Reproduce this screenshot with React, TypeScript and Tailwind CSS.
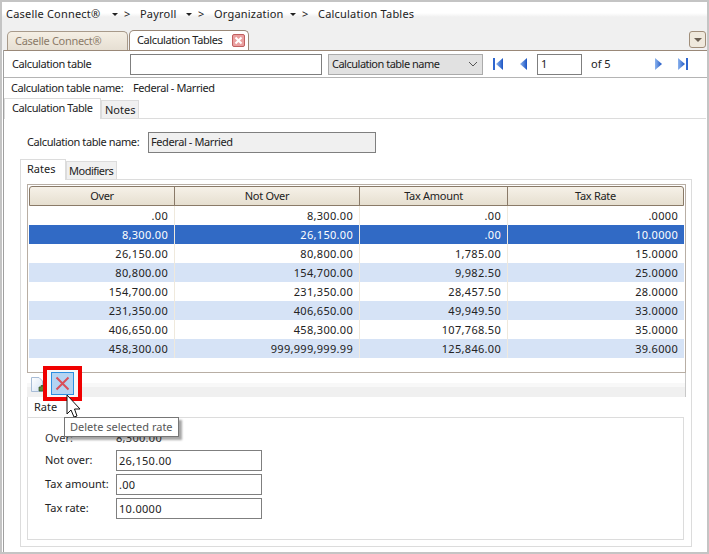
const rows = [
  [".00", "8,300.00", ".00", ".0000"],
  ["8,300.00", "26,150.00", ".00", "10.0000"],
  ["26,150.00", "80,800.00", "1,785.00", "15.0000"],
  ["80,800.00", "154,700.00", "9,982.50", "25.0000"],
  ["154,700.00", "231,350.00", "28,457.50", "28.0000"],
  ["231,350.00", "406,650.00", "49,949.50", "33.0000"],
  ["406,650.00", "458,300.00", "107,768.50", "35.0000"],
  ["458,300.00", "999,999,999.99", "125,846.00", "39.6000"],
];
const widths = ["w-[146px]", "w-[185px]", "w-[148px]", "w-[176px]"];
const headWidths = ["w-[145px]", "w-[185px]", "w-[148px]", "w-[175px]"];

function Crumb({ label, w }: { label: string; w: string }) {
  return (
    <div className={`flex items-center ${w}`}>
      <span>{label}</span>
      <span className="ml-auto w-0 h-0 border-x-[3px] border-x-transparent border-t-[3px] border-t-[#222] mr-[6px]" />
      <span className="w-[16px]">&gt;</span>
    </div>
  );
}

function Nav({ d }: { d: "first" | "prev" | "next" | "last" }) {
  const left = d === "first" || d === "prev";
  return (
    <svg width="12" height="14" viewBox="0 0 12 14" className="shrink-0">
      <defs>
        <linearGradient id={`n${d}`} x1="0" y1="0" x2="1" y2="0">
          <stop offset="0" stopColor="#8db4ee" />
          <stop offset="1" stopColor="#1c55c4" />
        </linearGradient>
      </defs>
      {d === "first" && <rect x="0" y="1" width="2" height="12" fill="#2f66cf" />}
      {d === "last" && <rect x="10" y="1" width="2" height="12" fill="#2f66cf" />}
      <path d={left ? "M10 1 L3 7 L10 13 Z" : "M2 1 L9 7 L2 13 Z"} fill={`url(#n${d})`} />
    </svg>
  );
}

function FormRow({ label, value }: { label: string; value: string }) {
  return (
    <div className="flex items-center h-[21px] mb-[3px]">
      <span className="w-[71px]">{label}</span>
      <div className="w-[146px] h-[21px] border border-[#7f7f7f] bg-white px-[2px] leading-[19px] tracking-[0.3px]">{value}</div>
    </div>
  );
}

export default function App() {
  return (
    <div className="relative w-[709px] h-[554px] overflow-hidden whitespace-nowrap bg-white text-[11px] text-[#222] border-2 border-[#c4c4c4] font-['Noto_Sans',sans-serif]">
      {/* header band: breadcrumb and document tabs */}
      <div className="h-[48px] bg-[linear-gradient(to_bottom,#ffffff_0px,#ffffff_11px,#f0f0f0_15px)]">
        <div className="flex items-center h-[24px] pl-[4px] tracking-[0.2px]">
          <Crumb label="Caselle Connect®" w="w-[134px]" />
          <Crumb label="Payroll" w="w-[74px]" />
          <Crumb label="Organization" w="w-[104px]" />
          <span>Calculation Tables</span>
        </div>
        <div className="flex items-end h-[24px] pl-[5px] pr-[1px]">
          <div className="w-[121px] h-[19px] rounded-t-[5px] border border-b-0 border-[#a89a8a] bg-gradient-to-b from-[#f5efe4] to-[#e6dfd3] text-[#8a7a68] pl-[7px] leading-[18px] tracking-[-0.3px]">Caselle Connect®</div>
          <div className="w-[120px] h-[20px] ml-[1px] rounded-t-[5px] border border-b-0 border-[#9a8878] bg-white pl-[7px] flex items-center tracking-[-0.4px]">
            Calculation Tables
            <span className="ml-auto mr-[3px] w-[13px] h-[13px] rounded-[2px] border border-[#c06060] bg-[#eaa0a0] flex items-center justify-center">
              <svg width="9" height="9" viewBox="0 0 9 9"><path d="M1.5 1.5 L7.5 7.5 M7.5 1.5 L1.5 7.5" stroke="#fff" strokeWidth="2" /></svg>
            </span>
          </div>
          <div className="ml-auto mb-[2px] w-[17px] h-[17px] rounded-[3px] border border-[#a08e7a] bg-[#efe9dd] flex items-center justify-center">
            <span className="w-0 h-0 border-x-[4px] border-x-transparent border-t-[4px] border-t-[#6a5f52]" />
          </div>
        </div>
      </div>
      {/* doc body */}
      <div className="ml-[1px] border-l border-[#a0a0a0] h-[503px]">
        <div className="border-t border-[#9a8878]" />
        {/* filter row */}
        <div className="flex items-center h-[27px] border-b border-[#b4b4b4] pl-[8px]">
          <span className="w-[118px] tracking-[-0.4px]">Calculation table</span>
          <div className="w-[192px] h-[21px] border border-[#7f7f7f] bg-white" />
          <div className="ml-[6px] w-[155px] h-[21px] border border-[#ababab] bg-[#e1e1e1] px-[3px] flex items-center tracking-[-0.5px]">
            Calculation table name
            <svg width="10" height="6" viewBox="0 0 10 6" className="ml-auto mr-[1px]"><path d="M1 1 L5 5 L9 1" fill="none" stroke="#555" /></svg>
          </div>
          <div className="ml-[10px]"><Nav d="first" /></div>
          <div className="ml-[12px]"><Nav d="prev" /></div>
          <div className="ml-[8px] w-[45px] h-[21px] border border-[#7f7f7f] bg-white px-[3px] leading-[17px]">1</div>
          <span className="ml-[9px] w-[62px]">of 5</span>
          <Nav d="next" />
          <div className="ml-[11px]"><Nav d="last" /></div>
        </div>
        {/* name row */}
        <div className="flex h-[20px] items-center pl-[7px] tracking-[-0.4px]">
          <span className="w-[122px]">Calculation table name:</span>
          <span>Federal - Married</span>
        </div>
        {/* main tabs */}
        <div className="flex items-end h-[21px] mr-[1px] border-b border-[#dcdcdc]">
          <div className="w-[97px] h-[21px] border border-b-0 border-[#dcdcdc] bg-white pl-[7px] leading-[17px] -mb-px z-10 tracking-[-0.4px]">Calculation Table</div>
          <div className="w-[38px] h-[18px] border border-b-0 border-[#dcdcdc] bg-[#f0f0f0] pl-[3px] leading-[18px]">Notes</div>
        </div>
        {/* main pane */}
        <div className="pt-[13px] pl-[16px]">
          <div className="flex items-center h-[21px] pl-[7px] tracking-[-0.4px]">
            <span className="w-[121px]">Calculation table name:</span>
            <div className="w-[228px] h-[21px] border border-[#7f7f7f] bg-[#f0f0f0] px-[2px] leading-[17px]">Federal - Married</div>
          </div>
          {/* inner tabs */}
          <div className="flex items-end h-[21px] mt-[6px] border-b border-[#dcdcdc] w-[672px]">
            <div className="w-[46px] h-[21px] border border-b-0 border-[#dcdcdc] bg-white pl-[6px] leading-[17px] -mb-px z-10">Rates</div>
            <div className="w-[51px] h-[18px] border border-b-0 border-[#dcdcdc] bg-[#f0f0f0] pl-[2px] leading-[18px] tracking-[-0.5px]">Modifiers</div>
          </div>
          <div className="w-[672px] h-[367px] border-x border-b border-[#dcdcdc] pl-[6px] pt-[4px]">
            {/* grid */}
            <div className="w-[659px] h-[189px] border border-[#b8aea4] px-[1px] pt-[1px]">
              <div className="flex h-[20px] border border-[#8a7a68] rounded-t-[3px] bg-gradient-to-b from-[#f6f1e8] to-[#e6dfd0] tracking-[-0.3px]">
                {["Over", "Not Over", "Tax Amount", "Tax Rate"].map((h, i) => (
                  <div key={h} className={`${headWidths[i]} ${i < 3 ? "border-r border-[#8a7a68]" : "grow"} text-center leading-[17px]`}>{h}</div>
                ))}
              </div>
              {rows.map((r, i) => (
                <div key={i} className={`flex h-[19px] ${i === 1 ? "bg-[#316ac5] text-white" : i % 2 === 1 ? "bg-[#d6e3f6]" : "bg-white"}`}>
                  {r.map((c, j) => (
                    <div key={j} className={`${widths[j]} ${j < 3 ? "border-r border-[#efe9dd]" : "grow"} text-right pr-[6px] leading-[19px] tracking-[0.3px]`}>{c}</div>
                  ))}
                </div>
              ))}
            </div>
            {/* toolbar */}
            <div className="w-[659px] h-[24px] flex flex-col relative border-r border-[#c8c8c8]">
              <div className="h-[10px]" />
              <div className="h-[4px] bg-[#f8f8f8]" />
              <div className="h-[10px] bg-[#f0f0f0]" />
              <svg width="17" height="18" viewBox="0 0 17 18" className="absolute left-[3px] top-[3px]">
                <defs>
                  <linearGradient id="pg" x1="0" y1="0" x2="1" y2="1">
                    <stop offset="0" stopColor="#ffffff" />
                    <stop offset="1" stopColor="#d4e2f4" />
                  </linearGradient>
                </defs>
                <path d="M1.5 1.5 H9 L12.5 5 V15.5 H1.5 Z" fill="url(#pg)" stroke="#a7bcd6" />
                <path d="M9 11 H11 V9.5 H13 V11 H15 V15 H9 Z" fill="#5c8a3c" stroke="#2f4f22" strokeWidth="0.7" />
              </svg>
            </div>
            {/* rate group */}
            <div className="w-[657px] border-l border-[#dcdcdc]">
              <div className="h-[20px] pl-[6px] leading-[19px]">Rate</div>
              <div className="h-[123px] -ml-px border border-[#dcdcdc] pl-[17px] pt-[11px]">
                <div className="flex items-center h-[18px] mb-[3px] text-[#333]"><span className="w-[71px]">Over:</span><span className="tracking-[0.3px]">8,300.00</span></div>
                <FormRow label="Not over:" value="26,150.00" />
                <FormRow label="Tax amount:" value=".00" />
                <FormRow label="Tax rate:" value="10.0000" />
              </div>
            </div>
          </div>
        </div>
      </div>

      {/* overlays: highlighted delete button, pointer and tooltip */}
      <div className="absolute left-[41px] top-[364px] w-[39px] h-[35px] border-[4px] border-[#f00000] bg-[#f8f8f8] flex items-center justify-center">
        <div className="w-[23px] h-[23px] border border-[#2d8ee0] bg-[#b4d4f2] flex items-center justify-center">
          <svg width="15" height="15" viewBox="0 0 15 15"><path d="M1.5 1.5 L13.5 13.5 M13.5 1.5 L1.5 13.5" stroke="#d9505a" strokeWidth="2" /></svg>
        </div>
      </div>
      <svg width="18" height="26" viewBox="0 0 18 26" className="absolute left-[64px] top-[392px]">
        <path d="M1 1 V20 L5 16 L8 23 L11 22 L8.5 15 L14 15 Z" fill="#fff" stroke="#111" />
      </svg>
      <div className="absolute left-[62px] top-[415px] w-[115px] h-[20px] border border-[#767676] bg-white text-[#575757] pl-[5px] leading-[18px] shadow-[3px_3px_2px_rgba(0,0,0,0.35)]">Delete selected rate</div>
    </div>
  );
}
